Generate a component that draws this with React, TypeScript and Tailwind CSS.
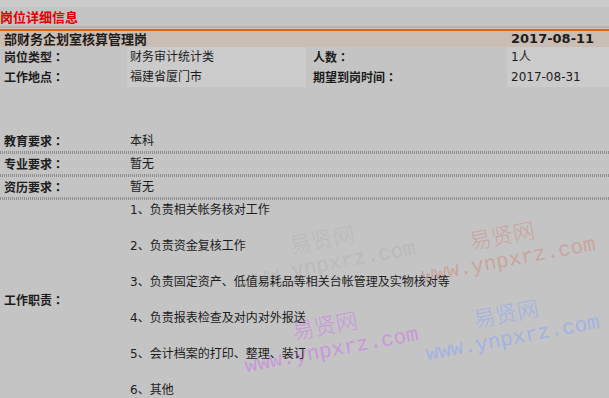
import React from "react";

const FONT = "font-['DejaVu_Sans','Noto_Sans_CJK_SC',sans-serif]";
const CJK = "font-['Noto_Sans_CJK_SC',sans-serif]";

const DUTIES = [
  "1、负责相关帐务核对工作",
  "2、负责资金复核工作",
  "3、负责固定资产、低值易耗品等相关台帐管理及实物核对等",
  "4、负责报表检查及对内对外报送",
  "5、会计档案的打印、整理、装订",
  "6、其他",
];

const REQS = [
  { label: "教育要求", value: "本科" },
  { label: "专业要求", value: "暂无" },
  { label: "资历要求", value: "暂无" },
];

// colon in TC face so it sits centred like the reference
function Label({ text }: { text: string }) {
  return (
    <span className={`font-bold ${CJK}`}>
      {text}
      <span className="font-['Noto_Sans_CJK_TC',sans-serif]">：</span>
    </span>
  );
}

function Watermark({ className, color }: { className: string; color: string }) {
  return (
    <div
      className={`absolute w-[180px] h-[56px] -rotate-[10.6deg] pointer-events-none select-none ${className} ${color}`}
    >
      <div className="pl-[53px] leading-[28px] text-[22px] font-['Noto_Sans_CJK_SC',serif] font-light">
        易贤网
      </div>
      <div className="leading-[28px] text-[21px] font-['Liberation_Mono',monospace] whitespace-nowrap">
        www.ynpxrz.com
      </div>
    </div>
  );
}

function DottedRule() {
  return (
    <div className="h-[3px] bg-[repeating-linear-gradient(90deg,#8e8e8e_0_1px,transparent_1px_2px)]" />
  );
}

export default function App() {
  return (
    <div
      className={`relative w-[609px] h-[398px] overflow-hidden bg-[#c4c4c4] text-[12px] text-[#1c1c1c] ${FONT}`}
    >
      <Watermark className="left-[238px] top-[223px]" color="text-[#bababa]" />
      <Watermark className="left-[418px] top-[219px]" color="text-[#c9a5a0]" />
      <Watermark className="left-[241px] top-[309px]" color="text-[#c898da]" />
      <Watermark className="left-[422px] top-[297px]" color="text-[#a3b2e3]" />

      <div className="relative">
        <div className="h-[7px] bg-[#cbcbcb]" />
        <div className={`h-[19px] flex items-center text-[13px] font-bold text-[#e00000] ${CJK}`}>
          岗位详细信息
        </div>
        <div className="h-[2px] bg-[#b3b3b3]" />
        <div className="h-px" />
        <div className="h-[2px] bg-[#e2640e]" />

        {/* header + basic info */}
        <div className="grid grid-cols-[127px_179px_201px_102px]">
          <div className={`col-span-3 h-[16px] flex items-center pl-[4px] bg-[#cabdb3] text-[13px] font-bold ${CJK}`}>
            部财务企划室核算管理岗
          </div>
          <div className="h-[16px] flex items-center pl-[4px] bg-[#cabdb3] text-[13px] font-bold">
            2017-08-11
          </div>

          <div className="h-[20px] flex items-center pl-[4px]"><Label text="岗位类型" /></div>
          <div className="h-[20px] flex items-center pl-[3px] bg-[#cbcbcb]">财务审计统计类</div>
          <div className="h-[20px] flex items-center pl-[7px]"><Label text="人数" /></div>
          <div className="h-[20px] flex items-center pl-[4px] bg-[#cbcbcb]">1人</div>

          <div className="h-[20px] flex items-center pl-[4px]"><Label text="工作地点" /></div>
          <div className="h-[20px] flex items-center pl-[3px] bg-[#cbcbcb]">福建省厦门市</div>
          <div className="h-[20px] flex items-center pl-[7px]"><Label text="期望到岗时间" /></div>
          <div className="h-[20px] flex items-center pl-[4px] bg-[#cbcbcb]">2017-08-31</div>
        </div>

        {/* requirements */}
        <div className="mt-[44px]">
          {REQS.map((r) => (
            <div key={r.label}>
              <div className="h-[20px] grid grid-cols-[127px_1fr] items-center">
                <div className="pl-[4px]"><Label text={r.label} /></div>
                <div className="pl-[3px]">{r.value}</div>
              </div>
              <DottedRule />
            </div>
          ))}
        </div>

        {/* duties */}
        <div className="grid grid-cols-[127px_1fr] items-center pt-[1px]">
          <div className="pl-[4px]"><Label text="工作职责" /></div>
          <div className="pl-[3px] flex flex-col gap-[18px] leading-[18px]">
            {DUTIES.map((d) => (
              <div key={d}>{d}</div>
            ))}
          </div>
        </div>
      </div>
    </div>
  );
}
